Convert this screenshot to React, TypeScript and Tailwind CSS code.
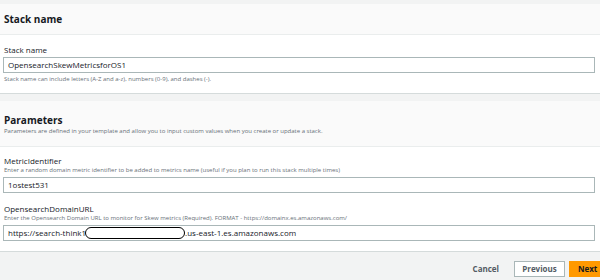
import React from "react";

const font = { fontFamily: '"Open Sans", "Liberation Sans", sans-serif' };

function Field({
  label,
  hint,
  children,
}: {
  label: string;
  hint?: string;
  children: React.ReactNode;
}) {
  return (
    <div className="flex flex-col">
      <div className="text-[8px] leading-[10px] text-[#16191f]">{label}</div>
      {hint && (
        <div className="text-[6px] leading-[9px] text-[#687078]">{hint}</div>
      )}
      {children}
    </div>
  );
}

function Input({ children }: { children: React.ReactNode }) {
  return (
    <div className="mt-[2px] h-[16px] w-[592px] ml-[-1px] flex items-center border border-[#aab7b8] bg-white px-[4px] text-[8px] text-[#16191f]">
      {children}
    </div>
  );
}

export default function App() {
  return (
    <div
      className="w-[600px] h-[280px] overflow-hidden bg-[#f2f3f3] pt-[4px]"
      style={font}
    >
      {/* Stack name */}
      <div className="bg-white border-b border-[#d5dbdb]">
        <div className="h-[31px] bg-[#fafafa] border-b border-[#eaeded] flex items-center px-[4px]">
          <span className="text-[10px] font-bold text-[#16191f]">Stack name</span>
        </div>
        <div className="px-[4px] pt-[10px] pb-[9px]">
          <Field label="Stack name">
            <Input>OpensearchSkewMetricsforOS1</Input>
          </Field>
          <div className="mt-[2px] text-[6px] leading-[9px] text-[#687078]">
            Stack name can include letters (A-Z and a-z), numbers (0-9), and dashes (-).
          </div>
        </div>
      </div>

      {/* Parameters */}
      <div className="mt-[7px] bg-white border-b border-[#d5dbdb]">
        <div className="h-[46px] bg-[#fafafa] border-b border-[#eaeded] flex flex-col justify-center px-[4px] pt-[2px]">
          <span className="text-[10px] leading-[13px] font-bold text-[#16191f]">Parameters</span>
          <span className="text-[6px] leading-[9px] text-[#687078]">
            Parameters are defined in your template and allow you to input custom values when you create or update a stack.
          </span>
        </div>
        <div className="px-[4px] pt-[9px] pb-[10px] flex flex-col gap-[11px]">
          <Field
            label="MetricIdentifier"
            hint="Enter a random domain metric identifier to be added to metrics name (useful if you plan to run this stack multiple times)"
          >
            <Input>1ostest531</Input>
          </Field>
          <Field
            label="OpensearchDomainURL"
            hint="Enter the Opensearch Domain URL to monitor for Skew metrics (Required). FORMAT - https://domainx.es.amazonaws.com/"
          >
            <Input>
              <span>https://search-think1</span>
              <span className="ml-[-1px] h-[12px] w-[100px] rounded-full border-[1.5px] border-black bg-white" />
              <span>.us-east-1.es.amazonaws.com</span>
            </Input>
          </Field>
        </div>
      </div>

      {/* Footer */}
      <div className="flex items-center justify-end pt-[9px]">
        <button className="mr-[15px] text-[8px] font-bold text-[#545b64]">Cancel</button>
        <button className="mr-[4px] h-[16px] w-[51px] border border-[#aab7b8] bg-white text-[8px] font-bold text-[#545b64]">
          Previous
        </button>
        <button className="h-[16px] w-[31px] bg-[#ff9900] text-[8px] font-bold text-[#16191f] text-left pl-[9px]">
          Next
        </button>
      </div>
    </div>
  );
}
